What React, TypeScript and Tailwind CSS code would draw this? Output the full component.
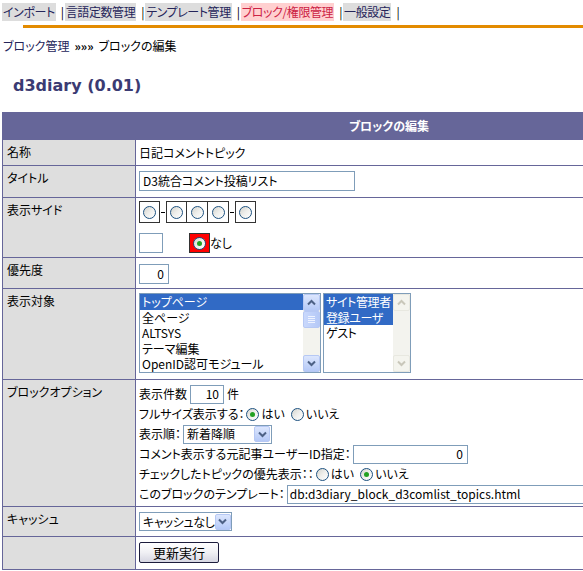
import React from "react";

const font = "font-['Noto_Sans_CJK_JP',sans-serif] [font-feature-settings:'palt']";

function Radio({ checked }: { checked?: boolean }) {
  return (
    <span className="inline-flex w-[13px] h-[13px] shrink-0 items-center justify-center rounded-full border border-[#1c5180] bg-gradient-to-br from-[#d4d4ce] via-[#efefec] to-white">
      {checked && <span className="w-[5px] h-[5px] rounded-full bg-[#22a122]" />}
    </span>
  );
}

function Chevron({ up, color = "#4d6185" }: { up?: boolean; color?: string }) {
  return (
    <svg width="9" height="7" viewBox="0 0 9 7">
      <path
        d={up ? "M1 5.5 L4.5 2 L8 5.5" : "M1 1.5 L4.5 5 L8 1.5"}
        fill="none"
        stroke={color}
        strokeWidth="2"
      />
    </svg>
  );
}

function DropButton() {
  return (
    <span className="flex w-[16px] h-[16px] shrink-0 items-center justify-center rounded-[2px] border border-[#b6c8f4] bg-gradient-to-b from-[#dce6fd] to-[#b5c9f7]">
      <Chevron />
    </span>
  );
}

function ScrollBar({ disabled }: { disabled?: boolean }) {
  const btn = disabled
    ? "border-[#e8e8e0] bg-[#f4f4ee]"
    : "border-[#b6c8f4] bg-gradient-to-b from-[#dce6fd] to-[#b5c9f7]";
  const c = disabled ? "#c9c7ba" : "#4d6185";
  return (
    <div className="flex w-[17px] shrink-0 flex-col bg-[#f3f3ee]">
      <span className={`flex h-[17px] items-center justify-center rounded-[2px] border ${btn}`}>
        <Chevron up color={c} />
      </span>
      {!disabled && (
        <span className="flex h-[17px] flex-col items-center justify-center gap-[1px] rounded-[2px] border border-[#b6c8f4] bg-gradient-to-r from-[#c9d8fc] to-[#b5c9f7]">
          <span className="h-px w-[7px] bg-[#eef3ff]" />
          <span className="h-px w-[7px] bg-[#eef3ff]" />
          <span className="h-px w-[7px] bg-[#eef3ff]" />
          <span className="h-px w-[7px] bg-[#eef3ff]" />
        </span>
      )}
      <div className="flex-1" />
      <span className={`flex h-[17px] items-center justify-center rounded-[2px] border ${btn}`}>
        <Chevron color={c} />
      </span>
    </div>
  );
}

function Label({ children, h }: { children: React.ReactNode; h: string }) {
  return <div className={`bg-[#dedede] px-[4px] pt-[4px] leading-[16px] ${h}`}>{children}</div>;
}

function Field({ children, className }: { children: React.ReactNode; className: string }) {
  return <div className={`bg-white pl-[3px] whitespace-nowrap ${className}`}>{children}</div>;
}

const navItems = [
  { t: "インポート", active: false },
  { t: "言語定数管理", active: false },
  { t: "テンプレート管理", active: false },
  { t: "ブロック/権限管理", active: true },
  { t: "一般設定", active: false },
];

export default function App() {
  return (
    <div className={`w-[583px] h-[571px] overflow-hidden bg-white text-[12px] text-black ${font}`}>
      {/* nav */}
      <div className="flex h-[18px] items-center mt-[3px] pl-[2px] text-[12px] leading-[18px] tracking-[-0.4px] whitespace-nowrap">
        {navItems.map((n) => (
          <React.Fragment key={n.t}>
            <span className={`px-px ${n.active ? "bg-[#ffd0d0] text-[#cc2244]" : "bg-[#dddddd] text-[#25255a]"}`}>
              {n.t}
            </span>
            <span className="ml-[5px] mr-px">|</span>
          </React.Fragment>
        ))}
      </div>
      <div className="ml-[23px] mt-[4px] h-[3px] bg-[#e38b00]" />

      {/* breadcrumb */}
      <div className="mt-[10px] pl-[3px] leading-[16px]">
        <span className="text-[#25255a]">ブロック管理</span>
        <span className="mx-[5px] font-bold">»»»</span>
        <span>ブロックの編集</span>
      </div>

      <div className="mt-[22px] pl-[13px] font-['DejaVu_Sans',sans-serif] text-[16px] font-bold leading-[20px] text-[#3b3b73]">
        d3diary (0.01)
      </div>

      {/* form table */}
      <div className="mt-[16px] ml-[2px] grid w-[774px] grid-cols-[132px_1fr] gap-px bg-[#666699] p-px">
        <div className="col-span-2 flex h-[26px] items-center justify-center font-bold text-white">
          ブロックの編集
        </div>

        <Label h="h-[25px]">名称</Label>
        <Field className="flex h-[25px] items-center">日記コメントトピック</Field>

        <Label h="h-[31px]">タイトル</Label>
        <Field className="pt-[5px]">
          <div className="flex h-[20px] w-[216px] items-center border border-[#7f9db9] px-[3px]">
            D3統合コメント投稿リスト
          </div>
        </Field>

        <Label h="h-[59px]">表示サイド</Label>
        <Field className="pt-[3px]">
          <div className="flex items-center">
            <span className="flex h-[22px] w-[21px] items-center justify-center border border-[#333]"><Radio /></span>
            <span className="mx-[1px] h-px w-[4px] bg-black" />
            <span className="flex h-[22px] w-[21px] items-center justify-center border border-[#333]"><Radio /></span>
            <span className="flex h-[22px] w-[21px] items-center justify-center border border-l-0 border-[#333]"><Radio /></span>
            <span className="flex h-[22px] w-[21px] items-center justify-center border border-l-0 border-[#333]"><Radio /></span>
            <span className="mx-[1px] h-px w-[4px] bg-black" />
            <span className="flex h-[22px] w-[21px] items-center justify-center border border-[#333]"><Radio /></span>
          </div>
          <div className="mt-[10px] flex items-center">
            <span className="h-[20px] w-[24px] border border-[#7f9db9]" />
            <span className="ml-[26px] flex h-[20px] w-[21px] items-center justify-center border border-[#333] bg-[#ff0000]">
              <Radio checked />
            </span>
            <span>なし</span>
          </div>
        </Field>

        <Label h="h-[30px]">優先度</Label>
        <Field className="pt-[6px]">
          <div className="flex h-[20px] w-[30px] items-center justify-end border border-[#7f9db9] px-[4px]">0</div>
        </Field>

        <Label h="h-[90px]">表示対象</Label>
        <Field className="flex gap-[2px] pt-[4px]">
          <div className="flex h-[80px] w-[182px] border border-[#7f9db9]">
            <div className="flex-1 overflow-hidden leading-[15.5px]">
              <div className="bg-[#316ac5] pl-[2px] text-white">トップページ</div>
              <div className="pl-[2px]">全ページ</div>
              <div className="pl-[2px]">ALTSYS</div>
              <div className="pl-[2px]">テーマ編集</div>
              <div className="pl-[2px]">OpenID認可モジュール</div>
            </div>
            <ScrollBar />
          </div>
          <div className="flex h-[80px] w-[88px] border border-[#7f9db9]">
            <div className="flex-1 overflow-hidden leading-[15.5px] tracking-[-0.4px]">
              <div className="bg-[#316ac5] pl-[2px] text-white">サイト管理者</div>
              <div className="bg-[#316ac5] pl-[2px] text-white">登録ユーザ</div>
              <div className="pl-[2px]">ゲスト</div>
            </div>
            <ScrollBar disabled />
          </div>
        </Field>

        <Label h="h-[126px]">ブロックオプション</Label>
        <Field className="pt-[4px]">
          <div className="flex h-[20px] items-center">
            表示件数
            <span className="mx-[3px] flex h-[19px] w-[34px] items-center justify-end border border-[#7f9db9] px-[4px]">10</span>
            件
          </div>
          <div className="flex h-[20px] items-center gap-[2px]">
            フルサイズ表示する：<Radio checked />はい <span className="ml-[2px]" /><Radio />いいえ
          </div>
          <div className="flex h-[20px] items-center">
            表示順：
            <span className="ml-[2px] flex h-[19px] w-[89px] items-center justify-between border border-[#7f9db9] pl-[3px] pr-px">
              新着降順
              <DropButton />
            </span>
          </div>
          <div className="flex h-[20px] items-center">
            コメント表示する元記事ユーザーID指定：
            <span className="ml-[2px] flex h-[19px] w-[115px] items-center justify-end border border-[#7f9db9] px-[4px]">0</span>
          </div>
          <div className="flex h-[20px] items-center gap-[2px]">
            チェックしたトピックの優先表示：：<Radio />はい <span className="ml-[2px]" /><Radio checked />いいえ
          </div>
          <div className="flex h-[20px] items-center">
            このブロックのテンプレート：
            <span className="ml-[2px] flex h-[19px] w-[420px] items-center border border-[#7f9db9] px-[2px]">
              db:d3diary_block_d3comlist_topics.html
            </span>
          </div>
        </Field>

        <Label h="h-[29px]">キャッシュ</Label>
        <Field className="pt-[5px]">
          <span className="flex h-[19px] w-[93px] items-center justify-between border border-[#7f9db9] pl-[3px] pr-px tracking-[-0.3px]">
            キャッシュなし
            <DropButton />
          </span>
        </Field>

        <Label h="h-[32px]"> </Label>
        <Field className="pt-[5px]">
          <button className="flex h-[21px] w-[80px] items-center justify-center rounded-[2px] border border-[#1c1c3c] bg-gradient-to-b from-white via-[#f0f0f4] to-[#d6d6e2] text-[13px]">
            更新実行
          </button>
        </Field>
      </div>
    </div>
  );
}
